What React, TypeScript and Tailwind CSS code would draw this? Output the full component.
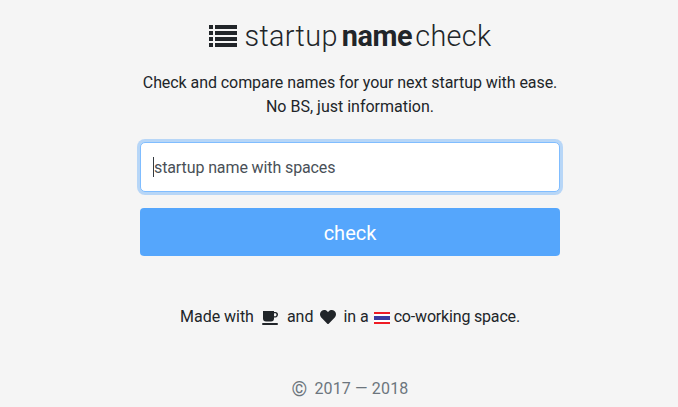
import { FaHeart } from "react-icons/fa";

function ListIcon() {
  return (
    <svg viewBox="0 0 28 22" className="w-[28px] h-[22px] mr-[8px] fill-[#212529]">
      <rect x="0" y="0" width="4" height="4" />
      <rect x="6" y="0" width="22" height="4" />
      <rect x="0" y="6" width="4" height="4" />
      <rect x="6" y="6" width="22" height="4" />
      <rect x="0" y="12" width="4" height="4" />
      <rect x="6" y="12" width="22" height="4" />
      <rect x="0" y="18" width="4" height="4" />
      <rect x="6" y="18" width="22" height="4" />
    </svg>
  );
}

function CoffeeIcon() {
  return (
    <svg viewBox="0 0 16 14" className="w-[16px] h-[14px] fill-[#212529]">
      <path d="M1 0h11v1h1.5C15 1 16 2 16 3.500S15 6.500 13.500 6.500H12v1C12 9.500 11 10.500 9 10.500H4C2 10.500 1 9.500 1 7.500zM12 2.200v3h1.200c.8 0 1.300-.6 1.300-1.500S14 2.200 13.200 2.200z" />
      <rect x="0" y="12" width="16" height="2" rx="1" />
    </svg>
  );
}

export default function App() {
  return (
    <div className="min-h-[407px] bg-[#f5f5f5] text-[#212529] font-['Roboto',sans-serif] pl-[22px] flex flex-col items-center overflow-hidden">
      <h1 className="mt-[16px] h-[40px] flex items-center justify-center text-[28.8px] font-light leading-[40px] tracking-[0.35px]">
        <ListIcon />
        <span>startup</span>
        <span className="font-bold ml-[4px] tracking-[-0.4px]">name</span>
        <span className="ml-[3px]">check</span>
      </h1>
      <p className="mt-[15px] text-[16px] leading-[24px] text-center">
        <span className="tracking-[-0.07px]">Check and compare names for your next startup with ease.</span>
        <br />
        No BS, just information.
      </p>
      <div className="mt-[23px] w-[420px] flex flex-col gap-[16px]">
        <div className="relative">
          <input
            placeholder="startup name with spaces"
            className="block w-full h-[50px] px-[13px] bg-white border border-[#80bdff] rounded-[5px] text-[16px] leading-[24px] tracking-[-0.11px] outline-none shadow-[0_0_0_3px_rgba(0,123,255,0.25)] placeholder:text-[#495057] caret-transparent"
          />
          <span className="absolute left-[13px] top-[15px] w-[1px] h-[20px] bg-[#343a40]" />
        </div>
        <button className="h-[48px] w-full pt-[2px] bg-[#55a6fc] text-white text-[20px] rounded-[4px] leading-[30px]">
          check
        </button>
      </div>
      <p className="mt-[49px] h-[24px] flex items-center text-[16px] leading-[24px] tracking-[-0.03px]">
        <span>Made with</span>
        <span className="ml-[8px] mr-[9px] pt-[1px]"><CoffeeIcon /></span>
        <span>and</span>
        <FaHeart className="w-[16px] h-[16px] ml-[7px] mr-[7px]" />
        <span>in a</span>
        <svg viewBox="0 0 16 12" className="w-[16px] h-[12px] ml-[5px] mr-[4px] mt-[1px]">
          <rect width="16" height="12" fill="#fff" />
          <rect width="16" height="2" fill="#ee1c25" />
          <rect y="10" width="16" height="2" fill="#ee1c25" />
          <rect y="4" width="16" height="4" fill="#3b3b9f" />
        </svg>
        <span className="tracking-[-0.18px]">co-working space.</span>
      </p>
      <p className="mt-[48px] text-[16px] leading-[24px] text-[#6c757d] flex items-center tracking-[0.15px]">
        <span className="text-[20px] mr-[7px]">©</span>
        <span>2017 — 2018</span>
      </p>
    </div>
  );
}
